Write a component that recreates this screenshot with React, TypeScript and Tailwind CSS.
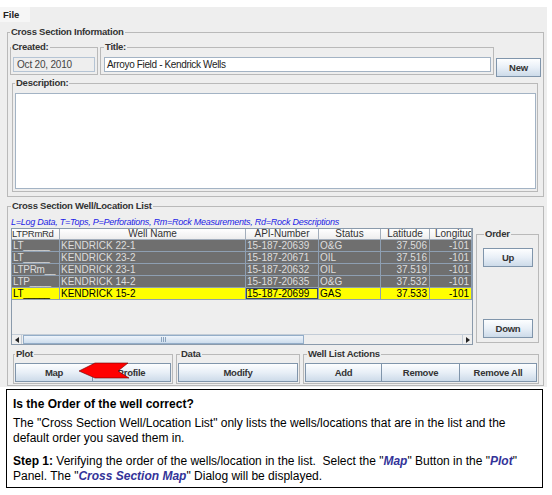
import React from "react";

const legendCls =
  "px-[1px] text-[9.5px] leading-[12px] font-bold text-[#333333] tracking-[-0.25px]";
const fsCls = "border border-[#b9b9b9]";

function Btn({ children, className = "" }: { children: React.ReactNode; className?: string }) {
  return (
    <div
      className={
        "flex h-[19px] items-center justify-center border border-[#8095ab] bg-linear-to-b from-[#fdfeff] via-[#e8eff7] to-[#cddbe9] text-[9.5px] font-bold leading-none tracking-[-0.25px] text-[#333333] " +
        className
      }
    >
      {children}
    </div>
  );
}

const W = ["w-[48px]", "w-[186px]", "w-[73px]", "w-[62px]", "w-[49px]", "w-[42px]"];

const rows = [
  { c: ["LT_____", "KENDRICK 22-1", "15-187-20639", "O&G", "37.506", "-101"], sel: false },
  { c: ["LT_____", "KENDRICK 23-2", "15-187-20671", "OIL", "37.516", "-101"], sel: false },
  { c: ["LTPRm__", "KENDRICK 23-1", "15-187-20632", "OIL", "37.519", "-101"], sel: false },
  { c: ["LTP____", "KENDRICK 14-2", "15-187-20635", "O&G", "37.532", "-101"], sel: false },
  { c: ["LT_____", "KENDRICK 15-2", "15-187-20699", "GAS", "37.533", "-101"], sel: true },
];

const headers = ["LTPRmRd", "Well Name", "API-Number", "Status", "Latitude", "Longitude"];

function Table() {
  return (
    <div className="flex h-[117px] w-[462px] flex-col overflow-hidden border border-[#8a9aab] bg-[#eeeeee]">
      <div className="flex h-[11px] w-[460px] overflow-hidden bg-linear-to-b from-[#ffffff] to-[#ececec]">
        {headers.map((h, i) => (
          <div
            key={i}
            className={
              W[i] +
              " flex h-[11px] shrink-0 items-center overflow-hidden whitespace-nowrap border-r border-b border-[#a3aebb] leading-[10px] text-[#333333] " +
              (i === 0
                ? "justify-start text-[9.5px] tracking-[-0.3px]"
                : i === 5
                ? "justify-start pl-[5px] text-[10px]"
                : "justify-center text-[10px]")
            }
          >
            {h}
          </div>
        ))}
      </div>
      {rows.map((r, ri) => (
        <div key={ri} className={"flex h-[12px] w-[460px] " + (r.sel ? "bg-[#ffff00]" : "bg-[#6f6f6f]")}>
          {r.c.map((v, i) => (
            <div
              key={i}
              className={
                W[i] +
                " flex h-[12px] shrink-0 items-center overflow-hidden whitespace-nowrap border-r border-b border-[#8e9fb2] text-[10px] leading-[11px] " +
                (r.sel ? "text-black " : "text-[#dddddd] ") +
                (i >= 4 ? "justify-end pr-[2px] " : "justify-start pl-[1px] ") +
                (i === 0 ? "tracking-[-0.3px] " : "") +
                (r.sel && i === 2 ? "shadow-[inset_0_0_0_1px_#3b4a5c]" : "")
              }
            >
              {v}
            </div>
          ))}
        </div>
      ))}
      <div className="flex-1" />
      <div className="flex h-[10px] w-[460px] border-t border-[#c3ccd6] bg-[#eeeeee]">
        <div className="flex w-[10px] items-center justify-center border-r border-[#c3ccd6]">
          <svg width="4" height="6" viewBox="0 0 4 6">
            <polygon points="0,3 4,0 4,6" fill="#222" />
          </svg>
        </div>
        <div className="flex flex-1 items-stretch">
          <div className="ml-[1px] flex w-[281px] items-center justify-center border border-[#93adc8] bg-linear-to-b from-[#eef4fb] to-[#cddded]">
            <div className="flex gap-[1px]">
              <div className="h-[5px] w-[1px] bg-[#8aa3bd]" />
              <div className="h-[5px] w-[1px] bg-[#8aa3bd]" />
              <div className="h-[5px] w-[1px] bg-[#8aa3bd]" />
            </div>
          </div>
        </div>
        <div className="flex w-[10px] items-center justify-center border-l border-[#c3ccd6]">
          <svg width="4" height="6" viewBox="0 0 4 6">
            <polygon points="4,3 0,0 0,6" fill="#222" />
          </svg>
        </div>
      </div>
    </div>
  );
}

export default function App() {
  return (
    <div className="relative h-[495px] w-[552px] overflow-hidden bg-white font-['Liberation_Sans',Arial,sans-serif] text-[#333333]">
      <div className="h-[7px]" />
      <div className="flex h-[380px] w-[547px] flex-col bg-[#eeeeee]">
        {/* menu bar */}
        <div className="flex h-[15px]">
          <div className="h-[15px] w-[30px] bg-[#f6f6f6] pl-[3px] text-[9.5px] font-bold leading-[15px] text-[#222222]">
            File
          </div>
        </div>

        {/* Cross Section Information */}
        <fieldset className={fsCls + " ml-[7px] mt-[4px] w-[537px] pl-[2px] pr-[2px] pt-[3px] pb-[4px]"}>
          <legend className={legendCls}>Cross Section Information</legend>
          <div className="flex items-start">
            <fieldset className={fsCls + " w-[88px] pl-[2px] pr-[2px] pt-[4px] pb-[2px]"}>
              <legend className={legendCls + " -ml-[2px]"}>Created:</legend>
              <div className="h-[15px] w-[82px] border border-[#b5c4d4] bg-[#eeeeee] pl-[3px] text-[10px] leading-[13px] tracking-[-0.2px] text-[#444444]">
                Oct 20, 2010
              </div>
            </fieldset>
            <fieldset className={fsCls + " ml-[2px] w-[394px] pl-[3px] pr-[2px] pt-[4px] pb-[2px]"}>
              <legend className={legendCls}>Title:</legend>
              <div className="h-[15px] w-[387px] border border-[#a3b3c4] bg-white pl-[2px] text-[10px] leading-[13px] tracking-[-0.35px] text-[#222222]">
                Arroyo Field - Kendrick Wells
              </div>
            </fieldset>
            <Btn className="ml-[2px] mt-[17px] w-[45px]">New</Btn>
          </div>
          <fieldset className={fsCls + " ml-[2px] w-[526px] pl-[2px] pr-[1px] pt-[4px] pb-[2px]"}>
            <legend className={legendCls}>Description:</legend>
            <div className="h-[96px] w-[521px] border border-[#a3b3c4] bg-white" />
          </fieldset>
        </fieldset>

        {/* Cross Section Well/Location List */}
        <fieldset className={fsCls + " ml-[7px] mt-[3px] w-[537px] pl-[3px] pr-[4px] pt-[4px] pb-[1px]"}>
          <legend className={legendCls}>Cross Section Well/Location List</legend>
          <div className="h-[12px] whitespace-nowrap text-[9px] italic leading-[12px] tracking-[-0.25px] text-[#2323e6]">
            L=Log Data, T=Tops, P=Perforations, Rm=Rock Measurements, Rd=Rock Descriptions
          </div>
          <div className="flex items-start">
            <Table />
            <fieldset className={fsCls + " ml-[3px] w-[63px] pl-[6px] pr-[5px] pt-[8px] pb-[4px]"}>
              <legend className={legendCls + " ml-[1px]"}>Order</legend>
              <div className="flex h-[90px] flex-col justify-between">
                <Btn className="w-[50px]">Up</Btn>
                <Btn className="w-[50px]">Down</Btn>
              </div>
            </fieldset>
          </div>
          <div className="mt-[3px] flex items-start">
            <fieldset className={fsCls + " ml-[2px] w-[160px] pl-[1px] pr-[1px] pt-[3px] pb-[1px]"}>
              <legend className={legendCls}>Plot</legend>
              <div className="flex">
                <Btn className="w-[78px]">Map</Btn>
                <Btn className="w-[78px] border-l-0">Profile</Btn>
              </div>
            </fieldset>
            <fieldset className={fsCls + " ml-[3px] w-[124px] pl-[1px] pr-[1px] pt-[3px] pb-[1px]"}>
              <legend className={legendCls + " ml-[2px]"}>Data</legend>
              <Btn className="w-[120px]">Modify</Btn>
            </fieldset>
            <fieldset className={fsCls + " ml-[3px] w-[236px] pl-[1px] pr-[1px] pt-[3px] pb-[1px]"}>
              <legend className={legendCls + " ml-[2px]"}>Well List Actions</legend>
              <div className="flex">
                <Btn className="w-[77px]">Add</Btn>
                <Btn className="w-[78px] border-l-0">Remove</Btn>
                <Btn className="w-[77px] border-l-0">Remove All</Btn>
              </div>
            </fieldset>
          </div>
        </fieldset>
      </div>

      {/* help text */}
      <div className="ml-[6px] mt-[2px] w-[537px] border border-black px-[6px] pt-[7px] pb-[3px] text-[12px] leading-[15px] text-black">
        <p className="font-bold">Is the Order of the well correct?</p>
        <p className="mt-[4px]">
          The "Cross Section Well/Location List" only lists the wells/locations that are in the list and the default
          order you saved them in.
        </p>
        <p className="mt-[8px]">
          <b>Step 1:</b> Verifying the order of the wells/location in the list.&nbsp; Select the "
          <b className="italic text-[#333399]">Map</b>" Button in the "<b className="italic text-[#333399]">Plot</b>"
          Panel. The "<b className="italic text-[#333399]">Cross Section Map</b>" Dialog will be displayed.
        </p>
      </div>

      {/* red arrow annotation */}
      <svg className="absolute left-[76px] top-[360px]" width="56" height="22" viewBox="0 0 56 22">
        <polygon
          points="3,11 19,3 52,3 42,11 53,18 19,18"
          fill="#ff0000"
          stroke="#6a0000"
          strokeWidth="0.6"
        />
      </svg>
    </div>
  );
}
